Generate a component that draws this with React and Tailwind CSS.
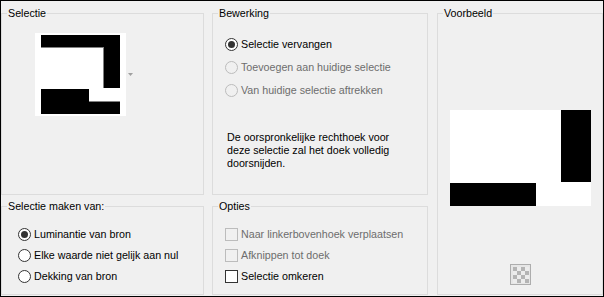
import React from 'react';

function Group({ title, className = '', children }) {
  return (
    <div className={`border border-[#dcdcdc] ${className}`}>
      <div className="-mt-[8px] ml-[5px] w-fit bg-[#f0f0f0] px-[1px] leading-[14px]">{title}</div>
      {children}
    </div>
  );
}

function Radio({ label, checked, disabled, h = 'h-[22px]' }) {
  return (
    <div className={`flex items-center ${h}`}>
      <span
        className={`flex h-[13px] w-[13px] items-center justify-center rounded-full border ${
          disabled ? 'border-[#bcbcbc] bg-[#f0f0f0]' : 'border-[#333333] bg-white'
        }`}
      >
        {checked && <span className="h-[7px] w-[7px] rounded-full bg-[#333333]" />}
      </span>
      <span className={`ml-[3px] leading-[13px] ${disabled ? 'text-[#6d6d6d]' : 'text-black'}`}>{label}</span>
    </div>
  );
}

function Check({ label, disabled }) {
  return (
    <div className="flex h-[21px] items-center">
      <span
        className={`h-[13px] w-[13px] border ${
          disabled ? 'border-[#bcbcbc] bg-[#f0f0f0]' : 'border-[#333333] bg-white'
        }`}
      />
      <span className={`ml-[3px] leading-[13px] ${disabled ? 'text-[#6d6d6d]' : 'text-black'}`}>{label}</span>
    </div>
  );
}

function Thumb() {
  return (
    <svg width="91" height="83" viewBox="0 0 91 83">
      <rect width="91" height="83" fill="#fff" />
      <rect x="6" y="2" width="79" height="12" fill="#000" />
      <rect x="6" y="14" width="62" height="1" fill="#808080" />
      <rect x="68" y="2" width="17" height="53" fill="#000" />
      <rect x="68" y="14" width="1" height="41" fill="#808080" />
      <rect x="6" y="56" width="79" height="25" fill="#000" />
      <rect x="54" y="56" width="31" height="12" fill="#fff" />
      <rect x="54" y="68" width="31" height="1" fill="#808080" />
    </svg>
  );
}

function Preview() {
  return (
    <svg width="141" height="96" viewBox="0 0 141 96">
      <rect width="141" height="96" fill="#fff" />
      <rect x="111" y="0" width="30" height="72" fill="#000" />
      <rect x="0" y="73" width="86" height="23" fill="#000" />
    </svg>
  );
}

function CheckerButton() {
  const cells = [];
  for (let r = 0; r < 4; r++) {
    for (let c = 0; c < 4; c++) {
      cells.push(
        <rect
          key={`${r}-${c}`}
          x={3 + c * 4}
          y={3 + r * 4}
          width="4"
          height="4"
          fill={(r + c) % 2 === 0 ? '#b4b4b4' : '#ececec'}
        />
      );
    }
  }
  return (
    <svg width="21" height="21" viewBox="0 0 21 21">
      <rect x="0.5" y="0.5" width="20" height="20" fill="#e6e6e6" stroke="#adadad" />
      {cells}
    </svg>
  );
}

export default function App() {
  return (
    <div className="flex h-[297px] w-[604px] border border-black bg-[#f0f0f0] pt-[12px] font-['Liberation_Sans',Arial,sans-serif] text-[10.7px] text-black">
      <div className="flex w-[203px] flex-col">
        <Group title="Selectie" className="h-[182px]">
          <div className="mt-[13px] flex items-center pl-[33px]">
            <Thumb />
            <svg width="5" height="3" viewBox="0 0 5 3" className="ml-[2px]">
              <polygon points="0,0 5,0 2.5,3" fill="#a0a0a0" />
            </svg>
          </div>
        </Group>
        <Group title="Selectie maken van:" className="mt-[11px] h-[89px]">
          <div className="mt-[11px] flex flex-col pl-[16px]">
            <Radio label="Luminantie van bron" checked h="h-[21px]" />
            <Radio label="Elke waarde niet gelijk aan nul" h="h-[21px]" />
            <Radio label="Dekking van bron" h="h-[21px]" />
          </div>
        </Group>
      </div>

      <div className="ml-[8px] flex w-[216px] flex-col">
        <Group title="Bewerking" className="h-[182px]">
          <div className="mt-[13px] flex flex-col gap-[1px] pl-[12px]">
            <Radio label="Selectie vervangen" checked />
            <Radio label="Toevoegen aan huidige selectie" disabled />
            <Radio label="Van huidige selectie aftrekken" disabled />
          </div>
          <p className="mt-[30px] pl-[14px] leading-[13px]">
            De oorspronkelijke rechthoek voor
            <br />
            deze selectie zal het doek volledig
            <br />
            doorsnijden.
          </p>
        </Group>
        <Group title="Opties" className="mt-[11px] h-[89px]">
          <div className="mt-[11px] flex flex-col pl-[12px]">
            <Check label="Naar linkerbovenhoek verplaatsen" disabled />
            <Check label="Afknippen tot doek" disabled />
            <Check label="Selectie omkeren" />
          </div>
        </Group>
      </div>

      <div className="ml-[9px] w-[166px]">
        <Group title="Voorbeeld" className="h-[282px]">
          <div className="flex flex-col items-center">
            <div className="mt-[90px]">
              <Preview />
            </div>
            <div className="mt-[58px]">
              <CheckerButton />
            </div>
          </div>
        </Group>
      </div>
    </div>
  );
}
